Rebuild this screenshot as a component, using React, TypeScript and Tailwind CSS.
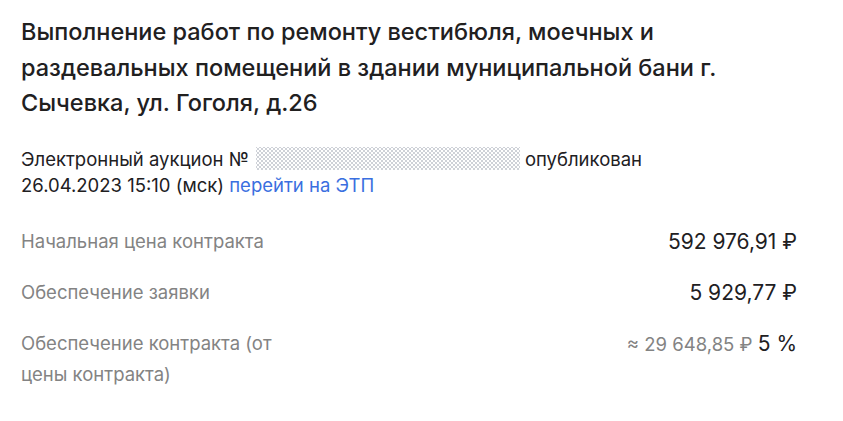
import React from "react";

export default function App() {
  return (
    <div className="w-[843px] h-[421px] bg-white overflow-hidden" style={{ fontFamily: "Inter, 'Noto Sans', sans-serif" }}>
      <div className="pl-[21px] pr-[46px] pt-[14px]">
        <h1 className="text-[23.5px] leading-[35.5px] font-medium text-[#21201f] w-[740px]">
          Выполнение работ по ремонту вестибюля, моечных и раздевальных помещений в здании муниципальной бани г. Сычевка, ул. Гоголя, д.26
        </h1>
        <div className="mt-[25px] text-[18.5px] leading-[26px] text-[#21201f]">
          <div className="flex items-center">
            <span>Электронный аукцион №</span>
            <span className="inline-block ml-[7px] mr-[5px] w-[264px] h-[23px] bg-[radial-gradient(circle,#b4b8c2_0.6px,transparent_0.9px),radial-gradient(circle,#b4b8c2_0.6px,transparent_0.9px)] bg-[length:4px_4px] bg-[position:0_0,2px_2px]" />
            <span>опубликован</span>
          </div>
          <div>
            26.04.2023 15:10 (мск) <span className="text-[#3a6fe0]">перейти на ЭТП</span>
          </div>
        </div>
        <div className="mt-[28px] flex flex-col gap-[20px]">
          <div className="flex justify-between items-start">
            <div className="text-[18.5px] leading-[31px] text-[#838383] w-[290px]">Начальная цена контракта</div>
            <div className="text-[21px] leading-[31px] text-[#21201f]">592 976,91 ₽</div>
          </div>
          <div className="flex justify-between items-start">
            <div className="text-[18.5px] leading-[31px] text-[#838383] w-[290px]">Обеспечение заявки</div>
            <div className="text-[21px] leading-[31px] text-[#21201f]">5 929,77 ₽</div>
          </div>
          <div className="flex justify-between items-start">
            <div className="text-[18.5px] leading-[31px] text-[#838383] w-[290px]">Обеспечение контракта (от цены контракта)</div>
            <div className="leading-[31px] text-[#21201f]">
              <span className="text-[18.5px] text-[#838383]">≈ 29 648,85 ₽ </span>
              <span className="text-[21px]">5 %</span>
            </div>
          </div>
        </div>
      </div>
    </div>
  );
}
